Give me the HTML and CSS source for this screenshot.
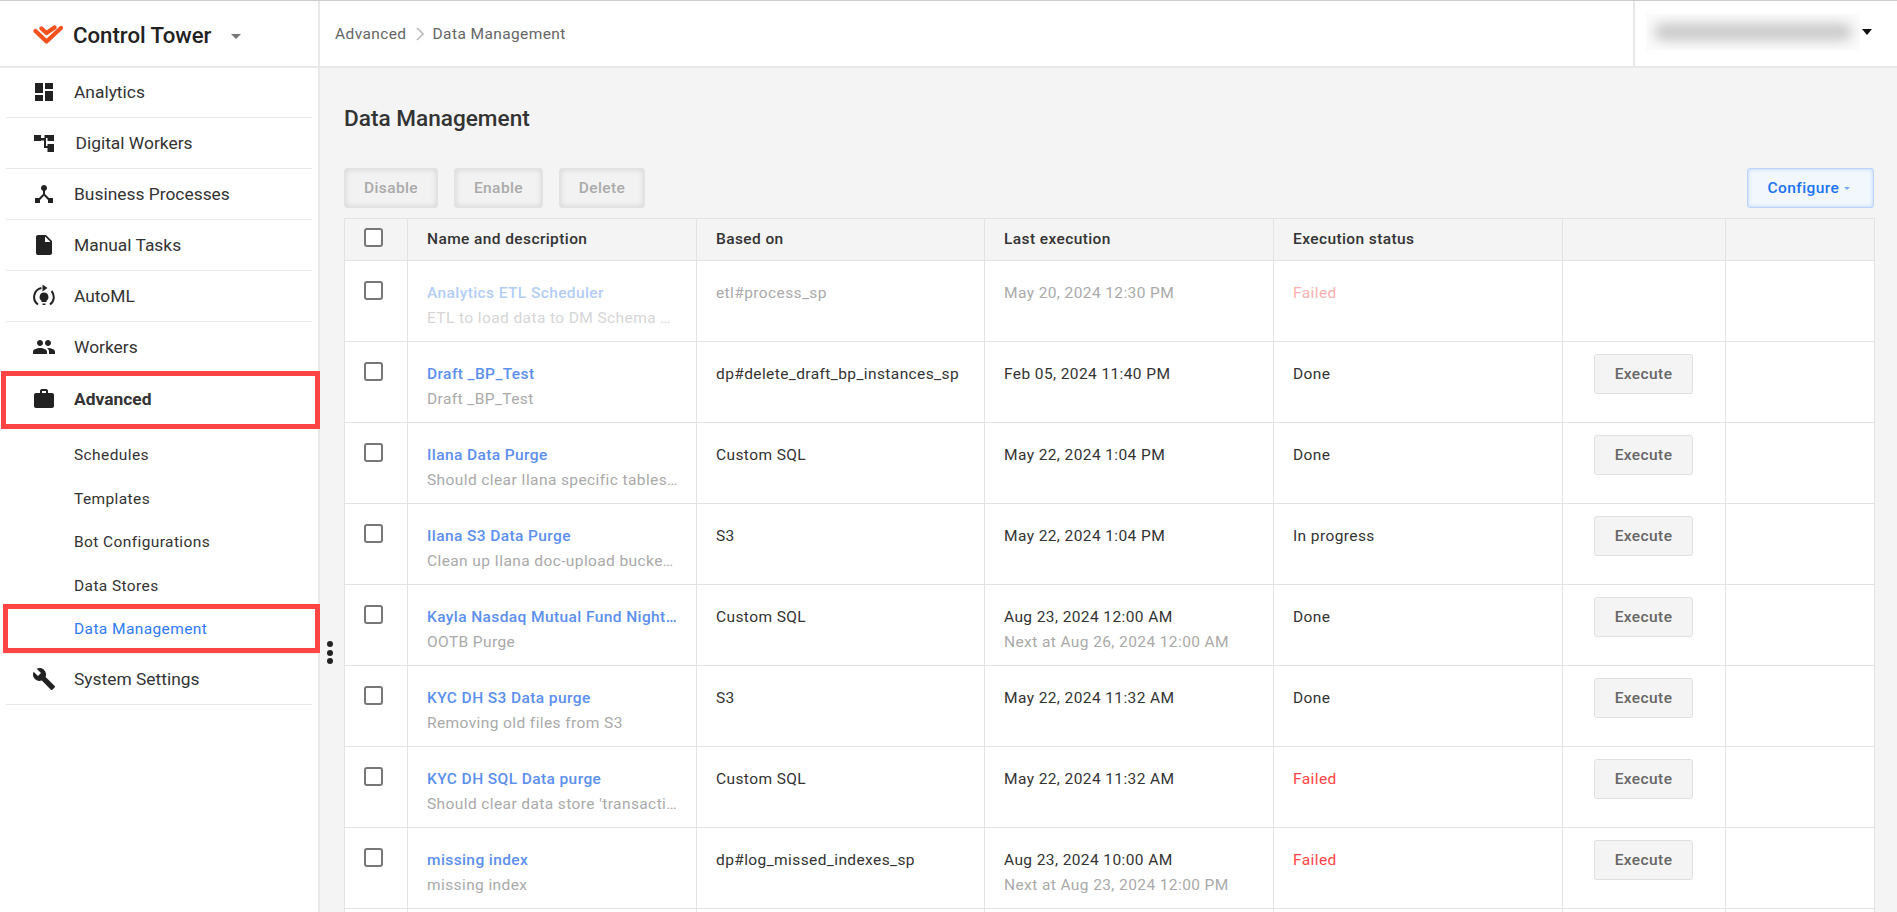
FILE: index.html
```html
<!DOCTYPE html>
<html lang="en">
<head>
    <meta charset="UTF-8">
    <meta name="viewport" content="width=device-width, initial-scale=1.0">
    <title>Data Management</title>
    <link rel="stylesheet" href="styles.css">
</head>
<body>
    <div class="app">
        <aside class="sidebar">
            <div class="brand">
                <svg class="brand-logo" viewBox="0 0 30 20"><path d="M2.500 6 13.500 16.500 28 3 M8.500 3.500 13.500 8 21.500 2.500" fill="none" stroke="#f4511e" stroke-width="4.200" stroke-linecap="round" stroke-linejoin="round"/></svg>
                <span class="brand-name">Control Tower</span>
                <span class="brand-caret"></span>
            </div>
            <nav class="nav">
                <a class="nav-item">
                    <svg class="nav-icon" viewBox="0 0 24 24"><path d="M3 13h8V3H3v10zm0 8h8v-6H3v6zm10 0h8V11h-8v10zm0-18v6h8V3h-8z"/></svg>
                    <span>Analytics</span>
                </a>
                <a class="nav-item nav-item-wide">
                    <svg class="nav-icon" viewBox="0 0 24 24"><path d="M2 4h7v3h3.500v-3H22v6h-6.500V7H14v8h1.500v-2H22v8h-6.500v-4H12V9.500H9V10H2z"/></svg>
                    <span>Digital Workers</span>
                </a>
                <a class="nav-item">
                    <svg class="nav-icon" viewBox="0 0 24 24"><path d="M17 16l-4-4V8.820C14.160 8.400 15 7.300 15 6c0-1.660-1.340-3-3-3S9 4.340 9 6c0 1.300.840 2.400 2 2.820V12l-4 4H3v5h5v-3.050l4-4.200 4 4.200V21h5v-5h-4z"/></svg>
                    <span>Business Processes</span>
                </a>
                <a class="nav-item">
                    <svg class="nav-icon" viewBox="0 0 24 24"><path d="M6 2c-1.100 0-1.990.900-1.990 2L4 20c0 1.100.890 2 1.990 2H18c1.100 0 2-.900 2-2V8l-6-6H6zm7 7V3.500L18.500 9H13z"/></svg>
                    <span>Manual Tasks</span>
                </a>
                <a class="nav-item">
                    <svg class="nav-icon" viewBox="0 0 24 24">
                        <path d="M6 20.500A9.200 9.200 0 0 1 9.500 4 M18 20.500A9.200 9.200 0 0 0 19.500 7" fill="none" stroke="#222" stroke-width="2"/>
                        <path d="M10.500 0.500 15.500 4 10.500 7.500z"/>
                        <path d="M12 8.500a4.500 4.500 0 0 1 2.500 8.200V18h-5v-1.300A4.500 4.500 0 0 1 12 8.500zM10.500 19.500h3V21h-3z"/>
                    </svg>
                    <span>AutoML</span>
                </a>
                <a class="nav-item">
                    <svg class="nav-icon" viewBox="0 0 24 24"><path d="M16 11c1.660 0 2.990-1.340 2.990-3S17.660 5 16 5c-1.660 0-3 1.340-3 3s1.340 3 3 3zm-8 0c1.660 0 2.990-1.340 2.990-3S9.660 5 8 5C6.340 5 5 6.340 5 8s1.340 3 3 3zm0 2c-2.330 0-7 1.170-7 3.500V19h14v-2.500c0-2.330-4.670-3.500-7-3.500zm8 0c-.290 0-.620.020-.970.050 1.160.840 1.970 1.970 1.970 3.450V19h6v-2.500c0-2.330-4.670-3.500-7-3.500z"/></svg>
                    <span>Workers</span>
                </a>
                <a class="nav-item nav-item-open marked">
                    <svg class="nav-icon" viewBox="0 0 24 24"><path d="M20 6h-4V4c0-1.110-.890-2-2-2h-4c-1.110 0-2 .890-2 2v2H4c-1.110 0-1.990.890-1.990 2L2 19c0 1.110.890 2 2 2h16c1.110 0 2-.890 2-2V8c0-1.110-.890-2-2-2zm-6 0h-4V4h4v2z"/></svg>
                    <span>Advanced</span>
                </a>
                <div class="submenu">
                    <a class="sub-item">Schedules</a>
                    <a class="sub-item">Templates</a>
                    <a class="sub-item">Bot Configurations</a>
                    <a class="sub-item">Data Stores</a>
                    <a class="sub-item sub-item-active marked">Data Management</a>
                </div>
                <a class="nav-item">
                    <svg class="nav-icon" viewBox="0 0 24 24"><path d="M22.700 19l-9.100-9.100c.900-2.300.400-5-1.500-6.900-2-2-5-2.400-7.400-1.300L9 6 6 9 1.600 4.700C.400 7.100.900 10.100 2.900 12.100c1.900 1.900 4.600 2.400 6.900 1.500l9.100 9.100c.400.400 1 .400 1.400 0l2.300-2.300c.500-.400.500-1.100.100-1.400z"/></svg>
                    <span>System Settings</span>
                </a>
            </nav>
        </aside>
        <div class="resize-dots"><i></i><i></i><i></i></div>

        <div class="content">
            <header class="topbar">
                <div class="breadcrumb">
                    <span>Advanced</span>
                    <svg class="crumb-sep" viewBox="0 0 8 14"><path d="M1 1l6 6-6 6" fill="none" stroke="#bbb" stroke-width="1.600"/></svg>
                    <span>Data Management</span>
                </div>
                <div class="user">
                    <div class="user-name"><div class="user-blur"></div></div>
                    <span class="user-caret"></span>
                </div>
            </header>

            <main class="main">
                <h1 class="page-title">Data Management</h1>
                <div class="toolbar">
                    <button class="btn-muted btn-disable">Disable</button>
                    <button class="btn-muted btn-enable">Enable</button>
                    <button class="btn-muted btn-delete">Delete</button>
                    <button class="btn-configure">Configure <span class="configure-caret"></span></button>
                </div>

                <table class="jobs">
                    <colgroup>
                        <col class="col-check"><col class="col-name"><col class="col-based"><col class="col-last"><col class="col-status"><col class="col-action"><col class="col-extra">
                    </colgroup>
                    <thead>
                        <tr>
                            <th><span class="checkbox"></span></th>
                            <th>Name and description</th>
                            <th>Based on</th>
                            <th>Last execution</th>
                            <th>Execution status</th>
                            <th></th>
                            <th></th>
                        </tr>
                    </thead>
                    <tbody>
                        <tr class="row-disabled">
                            <td><span class="checkbox"></span></td>
                            <td><a class="job-name">Analytics ETL Scheduler</a><div class="job-desc">ETL to load data to DM Schema …</div></td>
                            <td>etl#process_sp</td>
                            <td>May 20, 2024 12:30 PM</td>
                            <td class="failed">Failed</td>
                            <td></td>
                            <td></td>
                        </tr>
                        <tr>
                            <td><span class="checkbox"></span></td>
                            <td><a class="job-name">Draft _BP_Test</a><div class="job-desc">Draft _BP_Test</div></td>
                            <td>dp#delete_draft_bp_instances_sp</td>
                            <td>Feb 05, 2024 11:40 PM</td>
                            <td>Done</td>
                            <td class="action"><button class="btn-execute">Execute</button></td>
                            <td></td>
                        </tr>
                        <tr>
                            <td><span class="checkbox"></span></td>
                            <td><a class="job-name">Ilana Data Purge</a><div class="job-desc">Should clear Ilana specific tables…</div></td>
                            <td>Custom SQL</td>
                            <td>May 22, 2024 1:04 PM</td>
                            <td>Done</td>
                            <td class="action"><button class="btn-execute">Execute</button></td>
                            <td></td>
                        </tr>
                        <tr>
                            <td><span class="checkbox"></span></td>
                            <td><a class="job-name">Ilana S3 Data Purge</a><div class="job-desc">Clean up Ilana doc-upload bucke…</div></td>
                            <td>S3</td>
                            <td>May 22, 2024 1:04 PM</td>
                            <td>In progress</td>
                            <td class="action"><button class="btn-execute">Execute</button></td>
                            <td></td>
                        </tr>
                        <tr>
                            <td><span class="checkbox"></span></td>
                            <td><a class="job-name">Kayla Nasdaq Mutual Fund Night…</a><div class="job-desc">OOTB Purge</div></td>
                            <td>Custom SQL</td>
                            <td>Aug 23, 2024 12:00 AM<div class="job-desc">Next at Aug 26, 2024 12:00 AM</div></td>
                            <td>Done</td>
                            <td class="action"><button class="btn-execute">Execute</button></td>
                            <td></td>
                        </tr>
                        <tr>
                            <td><span class="checkbox"></span></td>
                            <td><a class="job-name">KYC DH S3 Data purge</a><div class="job-desc">Removing old files from S3</div></td>
                            <td>S3</td>
                            <td>May 22, 2024 11:32 AM</td>
                            <td>Done</td>
                            <td class="action"><button class="btn-execute">Execute</button></td>
                            <td></td>
                        </tr>
                        <tr>
                            <td><span class="checkbox"></span></td>
                            <td><a class="job-name">KYC DH SQL Data purge</a><div class="job-desc">Should clear data store 'transacti…</div></td>
                            <td>Custom SQL</td>
                            <td>May 22, 2024 11:32 AM</td>
                            <td class="failed">Failed</td>
                            <td class="action"><button class="btn-execute">Execute</button></td>
                            <td></td>
                        </tr>
                        <tr>
                            <td><span class="checkbox"></span></td>
                            <td><a class="job-name">missing index</a><div class="job-desc">missing index</div></td>
                            <td>dp#log_missed_indexes_sp</td>
                            <td>Aug 23, 2024 10:00 AM<div class="job-desc">Next at Aug 23, 2024 12:00 PM</div></td>
                            <td class="failed">Failed</td>
                            <td class="action"><button class="btn-execute">Execute</button></td>
                            <td></td>
                        </tr>
                        <tr>
                            <td></td><td></td><td></td><td></td><td></td><td></td><td></td>
                        </tr>
                    </tbody>
                </table>
            </main>
        </div>
    </div>
</body>
</html>
```

FILE: styles.css
```css
* {
    box-sizing: border-box;
}
html, body {
    height: 100%;
}
body {
    margin: 0;
    font-family: Roboto, "Liberation Sans", sans-serif;
    font-size: 15.5px;
    letter-spacing: 0.4px;
    color: #333;
    background-color: #f4f4f4;
    overflow: hidden;
}
.app {
    position: relative;
    display: flex;
    height: 912px;
    border-top: 1px solid #ccc;
    overflow: hidden;
}

/* sidebar */
.sidebar {
    flex: 0 0 320px;
    background-color: #fff;
    border-right: 2px solid #e8e8e8;
}
.brand {
    display: flex;
    align-items: center;
    height: 67px;
    padding: 3px 0 0 33px;
    border-bottom: 2px solid #e8e8e8;
}
.brand-logo {
    width: 30px;
    height: 20px;
    margin-right: 10px;
}
.brand-name {
    font-size: 22.2px;
    font-weight: 500;
    letter-spacing: 0;
    color: #222;
}
.brand-caret {
    width: 0;
    height: 0;
    margin: 3px 0 0 20px;
    border-left: 5px solid transparent;
    border-right: 5px solid transparent;
    border-top: 5px solid #777;
}
.nav {
    display: flex;
    flex-direction: column;
    margin-top: -1px;
}
.nav-item {
    position: relative;
    display: flex;
    align-items: center;
    height: 51px;
    margin: 0 6px;
    padding-left: 26px;
    font-size: 17.4px;
    letter-spacing: 0;
    color: #333;
    border-bottom: 1.5px solid #e8e8e8;
}
.nav-item-wide span {
    margin-left: 1.5px;
}
.nav-icon {
    flex: none;
    width: 24px;
    height: 24px;
    margin-right: 18px;
    fill: #222;
}
.nav-item-open {
    font-weight: 700;
    border-bottom: none;
}
.submenu {
    padding: 10px 0 2px;
    box-shadow: inset 0 8px 8px -8px rgba(0, 0, 0, 0.15), inset 0 -8px 8px -8px rgba(0, 0, 0, 0.15);
}
.sub-item {
    position: relative;
    display: block;
    height: 43.6px;
    line-height: 43.6px;
    padding-left: 74px;
    color: #333;
}
.sub-item-active {
    color: #2f7bf5;
}
/* red annotation boxes on top of the menu */
.marked::after {
    content: "";
    position: absolute;
    box-sizing: border-box;
    border: 5px solid #ff4444;
}
.nav-item.marked::after {
    top: -2px;
    left: -5px;
    right: -8px;
    height: 58px;
}
.sub-item.marked::after {
    top: -4px;
    left: 3px;
    right: -2px;
    height: 49px;
}
.resize-dots {
    position: absolute;
    top: 640px;
    left: 327px;
    display: flex;
    flex-direction: column;
    gap: 2.500px;
}
.resize-dots i {
    display: block;
    width: 6px;
    height: 6px;
    border-radius: 50%;
    background-color: #222;
}

/* top bar */
.content {
    flex: 1;
    min-width: 0;
}
.topbar {
    display: flex;
    align-items: stretch;
    justify-content: space-between;
    height: 67px;
    background-color: #fff;
    border-bottom: 2px solid #e8e8e8;
}
.breadcrumb {
    display: flex;
    align-items: center;
    gap: 9px;
    padding: 0 0 0 15px;
    color: #666;
}
.crumb-sep {
    width: 8px;
    height: 14px;
}
.user {
    display: flex;
    align-items: center;
    width: 264px;
    padding: 0 0 3px 11px;
    border-left: 2px solid #e8e8e8;
}
.user-name {
    width: 214px;
    height: 36px;
    padding: 9px 8px;
    background-color: #fbfbfb;
    overflow: hidden;
}
.user-blur {
    height: 18px;
    border-radius: 9px;
    background-color: #cbcbcb;
    filter: blur(6px);
}
.user-caret {
    width: 0;
    height: 0;
    margin-left: 2px;
    border-left: 5.500px solid transparent;
    border-right: 5.500px solid transparent;
    border-top: 6px solid #111;
}

/* main area */
.main {
    padding: 36px 23px 0 24px;
}
.page-title {
    margin: 0 0 34px;
    font-size: 22.6px;
    line-height: 30px;
    font-weight: 500;
    letter-spacing: 0;
    color: #333;
}
.toolbar {
    display: flex;
    gap: 16px;
    margin-bottom: 10px;
}
.toolbar button {
    height: 40px;
    padding: 0;
    font-family: inherit;
    font-size: 15.5px;
    font-weight: 500;
    letter-spacing: inherit;
    border-radius: 3px;
}
.btn-muted {
    color: #aaa;
    background-color: #f2f2f2;
    border: 1px solid #e2e2e2;
    box-shadow: inset 0 0 6px #d0d0d0;
}
.btn-disable { width: 94px; }
.btn-enable { width: 89px; }
.btn-delete { width: 86px; }
.btn-configure {
    margin-left: auto;
    width: 127px;
    color: #1a73f0;
    background-color: #f2f7fe;
    border: 1px solid #b9d3fb;
    box-shadow: inset 0 0 4px #b9d3fb;
}
.configure-caret {
    display: inline-block;
    margin: 0 3px 3px 1px;
    border-left: 3.500px solid transparent;
    border-right: 3.500px solid transparent;
    border-top: 3.500px solid #7aa9f5;
}

/* table */
.jobs {
    width: 1530px;
    table-layout: fixed;
    border-collapse: collapse;
}
.col-check { width: 63px; }
.col-name { width: 289px; }
.col-based { width: 288px; }
.col-last { width: 289px; }
.col-status { width: 289px; }
.col-action { width: 163px; }
.col-extra { width: 149px; }
.jobs th, .jobs td {
    padding: 0 19px;
    border: 1.500px solid #e3e3e3;
    text-align: left;
    vertical-align: top;
}
.jobs th {
    height: 41px;
    line-height: 41px;
    font-weight: 500;
    color: #333;
    background-color: #f4f4f4;
}
.jobs td {
    height: 81px;
    padding-top: 20px;
    line-height: 25px;
    background-color: #fff;
    white-space: nowrap;
}
.jobs th:first-child, .jobs td:first-child {
    padding: 0 0 0 19px;
}
.checkbox {
    display: block;
    width: 19px;
    height: 19px;
    margin-top: 9px;
    background-color: #fff;
    border: 2px solid #777;
    border-radius: 3px;
}
.jobs td:first-child .checkbox {
    margin-top: 20px;
}
.job-name {
    display: block;
    font-weight: 500;
    color: #5c8fee;
}
.job-desc {
    color: #aaa;
}
.failed {
    color: #ff4444;
}
.jobs .action {
    padding: 12px 0 0 31px;
}
.btn-execute {
    width: 99px;
    height: 40px;
    padding: 0;
    font-family: inherit;
    font-size: 15.5px;
    font-weight: 500;
    letter-spacing: inherit;
    color: #666;
    background-color: #f4f4f4;
    border: 1.500px solid #e0e0e0;
    border-radius: 3px;
}
.row-disabled td {
    color: #aaa;
}
.row-disabled .job-name {
    color: #b3cdf7;
}
.row-disabled .job-desc {
    color: #d6d6d6;
}
.row-disabled .failed {
    color: #fbb0b0;
}
```
